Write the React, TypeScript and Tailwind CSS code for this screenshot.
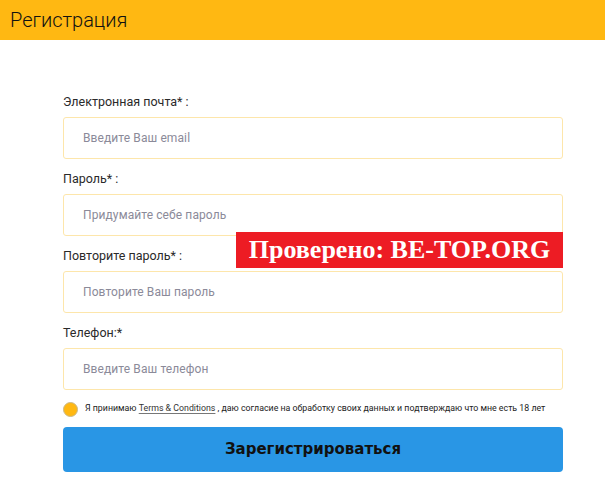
import React from 'react';

const fields = [
  { label: 'Электронная почта* :', placeholder: 'Введите Ваш email', type: 'email' },
  { label: 'Пароль* :', placeholder: 'Придумайте себе пароль', type: 'password' },
  { label: 'Повторите пароль* :', placeholder: 'Повторите Ваш пароль', type: 'password' },
  { label: 'Телефон:*', placeholder: 'Введите Ваш телефон', type: 'tel' },
];

export default function App() {
  return (
    <div className="w-[605px] h-[490px] bg-white overflow-hidden font-['Roboto',sans-serif]">
      {/* Header */}
      <div className="h-10 bg-[#ffb812] flex items-center pl-[10px]">
        <h1 className="text-[20px] font-light text-[#111] leading-none">Регистрация</h1>
      </div>

      {/* Form */}
      <div className="relative w-[500px] ml-[63px] pt-[53px]">
        {fields.map((f, i) => (
          <div key={f.label} className={i === 0 ? '' : 'mt-[11px]'}>
            <label className="block text-[12.5px] leading-[18px] text-[#2a2a2a] mb-[6px]">{f.label}</label>
            <input
              type={f.type}
              placeholder={f.placeholder}
              className="w-full h-[42px] border border-[#fde6ab] rounded-[3px] pl-[19px] text-[12px] tracking-[0.1px] outline-none placeholder:text-[#8b8a99]"
            />
          </div>
        ))}

        <div className="flex items-center mt-[11px] h-[16px]">
          <span className="w-[15px] h-[15px] rounded-full bg-[#ffb812] border border-[#c9b98a] shrink-0" />
          <p className="ml-[7px] text-[8.8px] text-[#222] whitespace-nowrap">
            Я принимаю{' '}
            <a className="text-[#333] underline decoration-[#777] underline-offset-2">Terms &amp; Conditions</a>{' '}
            , даю согласие на обработку своих данных и подтверждаю что мне есть 18 лет
          </p>
        </div>

        <button className="mt-[10px] w-full h-[45px] rounded-[4px] bg-[#2996e5] text-[#111] font-bold text-[15px] font-['DejaVu_Sans',sans-serif]">
          Зарегистрироваться
        </button>

        {/* watermark */}
        <div className="absolute left-[173px] top-[192px] w-[327px] h-[36px] bg-[#ed1c24] flex items-center justify-center">
          <span className="text-white font-bold text-[26px] leading-none font-['Liberation_Serif',serif]">
            Проверено: BE-TOP.ORG
          </span>
        </div>
      </div>
    </div>
  );
}
